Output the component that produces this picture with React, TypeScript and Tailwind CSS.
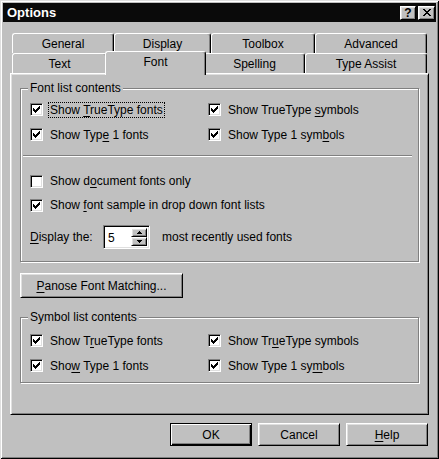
import React from 'react';

// Win95 bevels
const raised =
  'border border-t-white border-l-white border-r-black border-b-black shadow-[inset_1px_1px_0_#dfdfdf,inset_-1px_-1px_0_#808080]';
const sunken =
  'border border-t-[#808080] border-l-[#808080] border-r-white border-b-white shadow-[inset_1px_1px_0_#000,inset_-1px_-1px_0_#dfdfdf]';

// "&" marks the mnemonic letter
const Mn = ({ t }: { t: string }) => {
  const i = t.indexOf('&');
  if (i < 0) return <>{t}</>;
  return (
    <>
      {t.slice(0, i)}
      <span className="underline underline-offset-[2px]">{t[i + 1]}</span>
      {t.slice(i + 2)}
    </>
  );
};

const CheckMark = () => (
  <svg width="7" height="7" viewBox="0 0 7 7" shapeRendering="crispEdges">
    <path
      d="M0 2h1v3H0z M1 3h1v3H1z M2 4h1v3H2z M3 3h1v3H3z M4 2h1v3H4z M5 1h1v3H5z M6 0h1v3H6z"
      fill="#000"
    />
  </svg>
);

const Check = ({ label, checked = true, focus = false }: { label: string; checked?: boolean; focus?: boolean }) => (
  <div className="flex items-center gap-[5px]">
    <div className={`w-[13px] h-[13px] bg-white ${sunken} flex items-center justify-center shrink-0`}>
      {checked && <CheckMark />}
    </div>
    <span
      className={`px-[1px] leading-[14px] border whitespace-nowrap ${
        focus ? 'border-dotted border-black' : 'border-transparent'
      }`}
    >
      <Mn t={label} />
    </span>
  </div>
);

const Group = ({ title, className, children }: { title: string; className?: string; children: React.ReactNode }) => (
  <div className={`relative border border-[#808080] shadow-[inset_1px_1px_0_#fff,1px_1px_0_#fff] ${className ?? ''}`}>
    <span className="absolute -top-[8px] left-[7px] bg-[#c0c0c0] px-[2px] leading-[14px]">{title}</span>
    {children}
  </div>
);

const backTabs = [
  { label: 'General', w: 'w-[102px]' },
  { label: 'Display', w: 'w-[97px]' },
  { label: 'Toolbox', w: 'w-[104px]' },
  { label: 'Advanced', w: 'w-[112px]' },
];

const frontTabs = [
  { label: 'Text', w: 'w-[95px]' },
  { label: 'Font', w: 'w-[101px]', active: true },
  { label: 'Spelling', w: 'w-[101px]' },
  { label: 'Type Assist', w: 'w-[122px]' },
];

const tabBase =
  'flex items-center justify-center bg-[#c0c0c0] border-t border-l border-r border-t-white border-l-white border-r-black shadow-[inset_-1px_0_0_#808080] rounded-t-[3px]';

const Tab = ({ label, w, active }: { label: string; w: string; active?: boolean }) => (
  <div
    className={`${tabBase} ${w} ${
      active ? 'relative z-10 -mx-[2px] -mt-[2px] h-[24px] pb-[3px]' : 'h-[20px]'
    }`}
  >
    {label}
  </div>
);

const SpinArrow = ({ up }: { up?: boolean }) => (
  <svg width="5" height="3" viewBox="0 0 5 3" shapeRendering="crispEdges">
    <path d={up ? 'M2 0h1v1h1v1h1v1H0V2h1V1h1z' : 'M0 0h5v1H4v1H3v1H2V2H1V1H0z'} fill="#000" />
  </svg>
);

const Button = ({ label, def, className }: { label: string; def?: boolean; className?: string }) => (
  <div
    className={`flex items-center justify-center bg-[#c0c0c0] ${
      def
        ? 'border border-black shadow-[inset_1px_1px_0_#fff,inset_-1px_-1px_0_#000,inset_-2px_-2px_0_#808080]'
        : raised
    } ${className ?? ''}`}
  >
    <Mn t={label} />
  </div>
);

export default function App() {
  return (
    <div className="w-[439px] h-[459px] bg-[#c0c0c0] p-[3px] text-black text-[12px] font-['Liberation_Sans',Arial,sans-serif] shadow-[inset_1px_1px_0_#dfdfdf,inset_-1px_-1px_0_#000,inset_2px_2px_0_#fff,inset_-2px_-2px_0_#808080]">
      {/* title bar */}
      <div className="h-[19px] bg-[#0a0a0a] flex items-center justify-between pl-[4px] pr-[1px]">
        <span className="text-white font-bold text-[13px] leading-none">Options</span>
        <div className="flex gap-[2px]">
          <div className={`w-[16px] h-[14px] bg-[#c0c0c0] ${raised} flex items-center justify-center font-bold text-[12px] leading-none`}>
            ?
          </div>
          <div className={`w-[17px] h-[14px] bg-[#c0c0c0] ${raised} flex items-center justify-center`}>
            <svg width="8" height="7" viewBox="0 0 8 7" shapeRendering="crispEdges">
              <path d="M0 0h2v1h1v1h2V1h1V0h2v1H7v1H6v1H5v1h1v1h1v1h1v1H6V6H5V5H3v1H2v1H0V6h1V5h1V4h1V3H2V2H1V1H0z" fill="#000" />
            </svg>
          </div>
        </div>
      </div>

      <div className="px-[7px] pt-[11px]">
        {/* tabs */}
        <div className="flex pl-[2px]">
          {backTabs.map((t) => (
            <Tab key={t.label} {...t} />
          ))}
        </div>
        <div className="flex pl-[2px] h-[20px] items-start">
          {frontTabs.map((t) => (
            <Tab key={t.label} {...t} />
          ))}
        </div>

        {/* tab sheet */}
        <div className={`h-[342px] ${raised} px-[9px] pt-[14px]`}>
          <Group title="Font list contents" className="pl-[9px] pt-[8px] pb-[12px]">
            <div className="grid grid-cols-[178px_1fr] auto-rows-[25px] items-center">
              <Check label="Show &TrueType fonts" focus />
              <Check label="Show TrueType &symbols" />
              <Check label="Show Typ&e 1 fonts" />
              <Check label="Show Type 1 sym&bols" />
            </div>
            <div className="mt-[8px] ml-[-7px] mr-[6px] border-t border-b border-t-[#808080] border-b-white" />
            <div className="mt-[12px] flex flex-col">
              <div className="h-[24px] flex items-center">
                <Check label="Show d&ocument fonts only" checked={false} />
              </div>
              <div className="h-[24px] flex items-center">
                <Check label="Show &font sample in drop down font lists" />
              </div>
              <div className="mt-[8px] h-[24px] flex items-center">
                <span className="w-[73px]">
                  <Mn t="&Display the:" />
                </span>
                <div className={`w-[47px] h-[24px] bg-white ${sunken} flex p-[2px]`}>
                  <span className="flex-1 pl-[2px] leading-[20px]">5</span>
                  <div className="flex flex-col w-[16px]">
                    <div className={`h-[10px] bg-[#c0c0c0] ${raised} flex items-center justify-center`}>
                      <SpinArrow up />
                    </div>
                    <div className={`h-[10px] bg-[#c0c0c0] ${raised} flex items-center justify-center`}>
                      <SpinArrow />
                    </div>
                  </div>
                </div>
                <span className="ml-[12px]">most recently used fonts</span>
              </div>
            </div>
          </Group>

          <Button label="&Panose Font Matching..." className="mt-[11px] w-[163px] h-[25px]" />

          <Group title="Symbol list contents" className="mt-[19px] pl-[9px] pt-[10px] pb-[4px]">
            <div className="grid grid-cols-[178px_1fr] auto-rows-[25px] items-center">
              <Check label="Show T&rueType fonts" />
              <Check label="Show Tr&ueType symbols" />
              <Check label="Sho&w Type 1 fonts" />
              <Check label="Show Type 1 sy&mbols" />
            </div>
          </Group>
        </div>

        {/* dialog buttons */}
        <div className="mt-[8px] flex justify-end gap-[6px] pr-[1px]">
          <Button label="OK" def className="w-[82px] h-[23px]" />
          <Button label="Cancel" className="w-[82px] h-[23px]" />
          <Button label="&Help" className="w-[82px] h-[23px]" />
        </div>
      </div>
    </div>
  );
}
